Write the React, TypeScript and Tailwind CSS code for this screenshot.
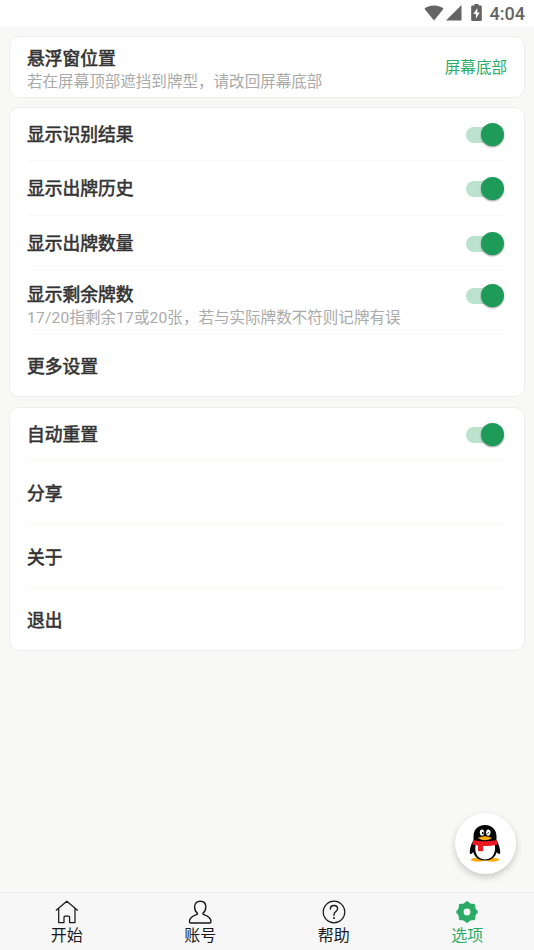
import type { ReactNode } from "react";

const TEXT = "font-[Roboto,'Noto_Sans_CJK_SC',sans-serif]";

function Toggle() {
  return (
    <span className="mt-[1px] mr-[3px] flex h-[23px] w-[38.5px] shrink-0 items-center">
      <span className="h-4 w-[30px] shrink-0 rounded-full bg-[#bae2cd]" />
      <span className="-ml-[15px] size-[23px] shrink-0 rounded-full bg-[#1e9b58] shadow-[0_1px_2px_rgba(0,0,0,0.4)]" />
    </span>
  );
}

function Title({ children }: { children: ReactNode }) {
  return (
    <div className="text-[17.78px] leading-6 whitespace-nowrap text-[#333] [-webkit-text-stroke:0.6px_#333]">
      {children}
    </div>
  );
}

function Hint({ children }: { children: ReactNode }) {
  return <div className="text-[15.55px] leading-[22px] whitespace-nowrap text-[#aaa]">{children}</div>;
}

function Card({ height, children }: { height: string; children: ReactNode }) {
  return (
    <section className={`flex flex-col rounded-[10px] border border-[#ededed] bg-white px-[17px] ${height}`}>
      {children}
    </section>
  );
}

function Row({ height, label, toggle, last }: { height: string; label: string; toggle?: boolean; last?: boolean }) {
  return (
    <div className={`flex shrink-0 items-center justify-between ${height} ${last ? "" : "border-b border-[#f9f9f4]"}`}>
      <div className="pt-[2px]">
        <Title>{label}</Title>
      </div>
      {toggle && <Toggle />}
    </div>
  );
}

function StatusBar() {
  return (
    <header className="flex h-[27px] items-center justify-end bg-white pr-[9px] text-[#646464]">
      <svg className="mr-[2px] -mt-[1px]" width="20" height="16" viewBox="0 0 20 16" fill="currentColor">
        <path d="M0.4 3.8C6 -0.6 14 -0.6 19.6 3.8L10 15.5Z" />
      </svg>
      <svg className="mr-[9px] -mt-[1px]" width="16" height="16" viewBox="0 0 16 16" fill="currentColor">
        <path d="M15.5 0V15.5H0Z" />
      </svg>
      <svg className="mr-[8px] -mt-[2px]" width="11" height="17" viewBox="0 0 10 16" fill="currentColor">
        <path d="M3 0H7V1.5H9Q10 1.5 10 2.5V15Q10 16 9 16H1Q0 16 0 15V2.5Q0 1.5 1 1.5H3Z" />
        <path d="M5.8 3.7L2 9.5H4.4V13.8L8 8H5.8Z" fill="white" />
      </svg>
      <span className="text-[18px] leading-[27px] font-medium">4:04</span>
    </header>
  );
}

function Penguin() {
  return (
    <svg className="-mt-[1px] mr-[2px]" width="32" height="37" viewBox="0 0 32 37">
      <ellipse cx="9" cy="34.7" rx="7.2" ry="2" fill="#faab07" />
      <ellipse cx="23" cy="34.7" rx="7.2" ry="2" fill="#faab07" />
      <path d="M16 0C8.5 0 4.5 5.4 4.5 11V15C3.3 17.2 .8 22.4 .8 27C.8 29.6 2 30 4.2 27C5.5 32 10 35.5 16 35.5S26.5 32 27.8 27C30 30 31.2 29.6 31.2 27C31.2 22.4 28.7 17.2 27.5 15V11C27.5 5.4 23.5 0 16 0Z" fill="#050505" />
      <path d="M7 18.5Q16 23 25.5 18.5C27.6 26 24.5 34.5 16 34.5S4.8 26 7 18.5Z" fill="white" />
      <path d="M4.3 15Q16 17.6 27.7 15L28.8 19.5Q16 22.5 3.3 19.5Z" fill="#eb1923" />
      <path d="M9 19.5H14V26.2L9 26Z" fill="#eb1923" />
      <ellipse cx="13" cy="7.6" rx="2.2" ry="3.1" fill="white" />
      <ellipse cx="19.3" cy="7.6" rx="2.2" ry="3.1" fill="white" />
      <ellipse cx="13.8" cy="8" rx=".9" ry="1.3" fill="#050505" />
      <path d="M18.3 8.7Q19.3 6.5 20.3 8.5" fill="none" stroke="#050505" strokeWidth=".9" />
      <path d="M8.8 13Q16 9.5 23.2 13Q16 17.5 8.8 13Z" fill="#faab07" />
    </svg>
  );
}

function HomeIcon() {
  return (
    <svg width="24" height="24" viewBox="0 0 24 24" fill="none" stroke="currentColor" strokeWidth="1.25" strokeLinecap="round" strokeLinejoin="round">
      <path d="M1.2 10.2L11.8 1.3L22.5 10.2M3.7 8.5V22.5H9V17.2Q9 16.2 10 16.2H13.6Q14.6 16.2 14.6 17.2V22.5H20V8.5" />
    </svg>
  );
}

function AccountIcon() {
  return (
    <svg width="24" height="24" viewBox="0 0 24 24" fill="none" stroke="currentColor" strokeWidth="1.4" strokeLinejoin="round">
      <path d="M9.4 13.4C7.3 11.6 6.6 9.4 6.6 6.9C6.6 3.2 8.7 1.2 12.2 1.2S17.8 3.2 17.8 6.9C17.8 9.4 17.1 11.6 15 13.4C14.7 14 15 14.3 16 14.7C20.5 16.5 23 18 23 21.5Q23 23 21.5 23H2.9Q1.4 23 1.4 21.5C1.4 18 3.8 16.5 8.4 14.7C9.4 14.3 9.7 14 9.4 13.4Z" />
    </svg>
  );
}

function HelpIcon() {
  return (
    <svg width="24" height="24" viewBox="0 0 24 24" fill="none" stroke="currentColor" strokeWidth="1.2" strokeLinecap="round">
      <circle cx="12" cy="12" r="10.8" />
      <path d="M8.4 9C8.4 6.8 9.8 5.5 12 5.5S15.6 6.8 15.6 8.8C15.6 11.4 12 11.7 12 14.5V15.3" strokeWidth="1.4" />
      <circle cx="12" cy="18" r="1" fill="currentColor" stroke="none" />
    </svg>
  );
}

function OptionsIcon() {
  return (
    <svg width="24" height="24" viewBox="0 0 24 24" fill="currentColor">
      <path
        stroke="currentColor"
        strokeWidth="1.6"
        strokeLinejoin="round"
        d="M12 1.8L15.2 4.3L19.2 4.8L19.7 8.8L22.2 12L19.7 15.2L19.2 19.2L15.2 19.7L12 22.2L8.8 19.7L4.8 19.2L4.3 15.2L1.8 12L4.3 8.8L4.8 4.8L8.8 4.3Z"
      />
      <circle cx="12" cy="12" r="3.4" fill="#f7f7f7" />
    </svg>
  );
}

function Tab({ icon, label, active }: { icon: ReactNode; label: string; active?: boolean }) {
  return (
    <div className={`flex flex-1 flex-col items-center pt-[7px] ${active ? "text-[#2aac67]" : "text-[#1a1a1a]"}`}>
      {icon}
      <span className="mt-[1px] text-[16px] leading-[22px]">{label}</span>
    </div>
  );
}

export default function App() {
  return (
    <div className={`relative flex h-[950px] w-[534px] flex-col overflow-hidden bg-[#f8f8f6] ${TEXT}`}>
      <StatusBar />
      <main className="flex flex-1 flex-col px-[9px] pt-[9px]">
        <Card height="h-[62px]">
          <div className="flex h-full items-center justify-between">
            <div className="pt-[5px]">
              <Title>悬浮窗位置</Title>
              <Hint>若在屏幕顶部遮挡到牌型，请改回屏幕底部</Hint>
            </div>
            <span className="pt-[3px] text-[15.55px] text-[#2aac67]">屏幕底部</span>
          </div>
        </Card>
        <Card height="mt-[9px] h-[290px]">
          <Row height="h-[53px]" label="显示识别结果" toggle />
          <Row height="h-[55px]" label="显示出牌历史" toggle />
          <Row height="h-[55px]" label="显示出牌数量" toggle />
          <div className="h-16 shrink-0 border-b border-[#f9f9f4] pt-[12px]">
            <div className="flex h-6 items-center justify-between">
              <Title>显示剩余牌数</Title>
              <Toggle />
            </div>
            <Hint>
              <span className="tracking-[0.2px]">17/20</span>指剩余<span className="tracking-[0.2px]">17</span>或
              <span className="tracking-[0.2px]">20</span>张，若与实际牌数不符则记牌有误
            </Hint>
          </div>
          <Row height="h-[62px]" label="更多设置" last />
        </Card>
        <Card height="mt-[10px] h-[244px]">
          <Row height="h-[53px]" label="自动重置" toggle />
          <Row height="h-16" label="分享" />
          <Row height="h-16" label="关于" />
          <Row height="h-[62px]" label="退出" last />
        </Card>
      </main>
      <nav className="flex h-[58px] shrink-0 border-t border-[#ebebeb] bg-[#f7f7f7]">
        <Tab icon={<HomeIcon />} label="开始" />
        <Tab icon={<AccountIcon />} label="账号" />
        <Tab icon={<HelpIcon />} label="帮助" />
        <Tab icon={<OptionsIcon />} label="选项" active />
      </nav>
      <button className="absolute right-[18px] bottom-[76px] flex size-[61px] items-center justify-center rounded-full bg-white shadow-[0_3px_7px_rgba(0,0,0,0.2)]">
        <Penguin />
      </button>
    </div>
  );
}
